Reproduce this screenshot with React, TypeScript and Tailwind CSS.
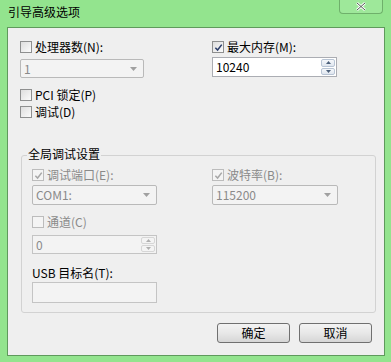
const font = { fontFamily: '"Noto Sans CJK SC", "Liberation Sans", sans-serif' };

function Check({ checked = false, disabled = false }: { checked?: boolean; disabled?: boolean }) {
  return (
    <span
      className={`flex h-[12px] w-[12px] shrink-0 items-center justify-center border ${
        disabled ? "border-[#bcbcbc] bg-[#f4f4f4]" : "border-[#8e8f8f] bg-gradient-to-br from-[#dedede] to-[#fbfbfb]"
      }`}
    >
      {checked && (
        <svg viewBox="0 0 10 10" className="h-[9px] w-[9px]">
          <path
            d="M1.5 5.2 L4 7.8 L8.6 1.8"
            fill="none"
            stroke={disabled ? "#a8a8a8" : "#2c3e6a"}
            strokeWidth="1.7"
          />
        </svg>
      )}
    </span>
  );
}

function CheckRow({
  label,
  checked,
  disabled,
  dim,
}: {
  label: string;
  checked?: boolean;
  disabled?: boolean;
  dim?: boolean;
}) {
  return (
    <div className="flex h-[14px] items-center gap-[3px]">
      <Check checked={checked} disabled={disabled} />
      <span className={`text-[12px] leading-none ${dim ? "text-[#8a8a8a]" : "text-black"}`}>{label}</span>
    </div>
  );
}

function Select({ value, w, h = "h-[19px]" }: { value: string; w: string; h?: string }) {
  return (
    <div
      className={`flex ${w} ${h} items-center justify-between rounded-[2px] border border-[#b9b9b9] bg-[#f3f3f3] pl-[3px] pr-[6px]`}
    >
      <span className="text-[12px] leading-none text-[#8a8a8a]">{value}</span>
      <svg viewBox="0 0 7 4" className="h-[4px] w-[7px]">
        <path d="M0 0 H7 L3.5 4 Z" fill="#a0a0a0" />
      </svg>
    </div>
  );
}

function Spin({ value, disabled, w, h }: { value: string; disabled?: boolean; w: string; h: string }) {
  return (
    <div
      className={`flex ${w} ${h} items-stretch border ${
        disabled ? "border-[#c4c4c4] bg-[#f3f3f3]" : "border-[#abadb3] bg-white"
      }`}
    >
      <span
        className={`flex flex-1 items-center pl-[3px] text-[12px] leading-none ${
          disabled ? "text-[#8a8a8a]" : "text-black"
        }`}
      >
        {value}
      </span>
      <div className="my-[1px] mr-[1px] flex w-[14px] flex-col gap-[1px]">
        {[0, 1].map((i) => (
          <div
            key={i}
            className={`flex flex-1 items-center justify-center rounded-[2px] border ${
              disabled ? "border-[#d6d6d6] bg-[#f4f4f4]" : "border-[#b8c4d4] bg-gradient-to-b from-[#f6f8fb] to-[#dfe6ef]"
            }`}
          >
            <svg viewBox="0 0 5 3" className="h-[3px] w-[5px]">
              <path d={i === 0 ? "M0 3 H5 L2.5 0 Z" : "M0 0 H5 L2.5 3 Z"} fill={disabled ? "#b0b0b0" : "#4c607a"} />
            </svg>
          </div>
        ))}
      </div>
    </div>
  );
}

function Btn({ label }: { label: string }) {
  return (
    <button className="flex h-[20px] w-[73px] items-center justify-center rounded-[3px] border border-[#707070] bg-gradient-to-b from-[#f3f3f3] via-[#e8e8e8] to-[#d6d6d6] text-[12px] leading-none text-black">
      {label}
    </button>
  );
}

export default function App() {
  return (
    <div className="flex h-[362px] w-[391px] flex-col bg-[#93e48e]" style={font}>
      {/* title bar */}
      <div className="flex h-[27px] shrink-0 items-start justify-between">
        <span className="pl-[8px] pt-[6px] text-[12px] leading-none text-black">引导高级选项</span>
        <div className="mr-[8px] flex h-[14px] w-[44px] items-center justify-center rounded-b-[4px] border border-t-0 border-[#6fb06b] bg-[#9ee89a]">
          <svg viewBox="0 0 10 9" className="h-[9px] w-[10px]">
            <path d="M1 1 L9 8 M9 1 L1 8" stroke="#ffffff" strokeWidth="2.6" />
            <path d="M1 1 L9 8 M9 1 L1 8" stroke="#505a50" strokeWidth="1" />
          </svg>
        </div>
      </div>

      {/* client area */}
      <div className="ml-[7px] flex h-[329px] w-[378px] flex-col border border-[#5f9a5c] bg-[#efefef]">
        <div className="grid grid-cols-[192px_1fr] pl-[12px] pt-[12px]">
          <div className="flex flex-col">
            <CheckRow label="处理器数(N):" />
            <div className="mt-[5px]">
              <Select value="1" w="w-[124px]" />
            </div>
            <div className="mt-[10px]">
              <CheckRow label="PCI 锁定(P)" />
            </div>
            <div className="mt-[3px]">
              <CheckRow label="调试(D)" />
            </div>
          </div>
          <div className="flex flex-col">
            <CheckRow label="最大内存(M):" checked />
            <div className="mt-[3px]">
              <Spin value="10240" w="w-[125px]" h="h-[20px]" />
            </div>
          </div>
        </div>

        {/* group box */}
        <div className="relative ml-[13px] mt-[36px] h-[158px] w-[355px] rounded-[3px] border border-[#d2d2d2]">
          <span className="absolute -top-[8px] left-[5px] bg-[#efefef] px-[1px] text-[12px] leading-none text-black">
            全局调试设置
          </span>
          <div className="grid grid-cols-[180px_1fr] pl-[10px] pt-[12px]">
            <div className="flex flex-col">
              <CheckRow label="调试端口(E):" checked disabled dim />
              <div className="mt-[3px]">
                <Select value="COM1:" w="w-[125px]" h="h-[20px]" />
              </div>
              <div className="mt-[10px]">
                <CheckRow label="通道(C)" disabled dim />
              </div>
              <div className="mt-[6px]">
                <Spin value="0" disabled w="w-[125px]" h="h-[19px]" />
              </div>
              <div className="mt-[12px] flex h-[14px] items-center text-[12px] leading-none text-black">
                USB 目标名(T):
              </div>
              <div className="mt-[2px] h-[21px] w-[125px] border border-[#c4c4c4] bg-[#f3f3f3]" />
            </div>
            <div className="flex flex-col">
              <CheckRow label="波特率(B):" checked disabled dim />
              <div className="mt-[3px]">
                <Select value="115200" w="w-[126px]" h="h-[20px]" />
              </div>
            </div>
          </div>
        </div>

        <div className="mt-[10px] flex justify-end gap-[9px] pr-[12px]">
          <Btn label="确定" />
          <Btn label="取消" />
        </div>
      </div>
    </div>
  );
}
